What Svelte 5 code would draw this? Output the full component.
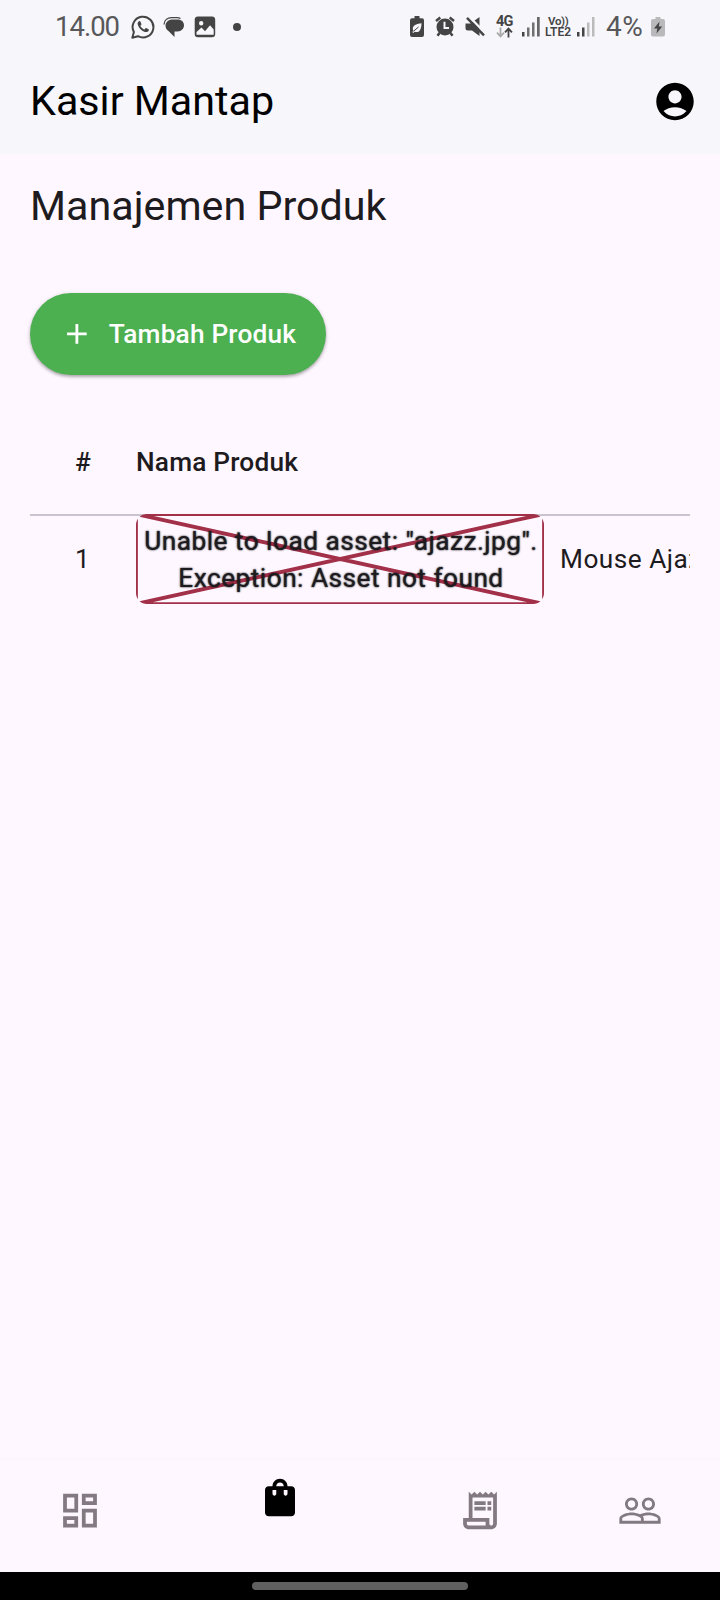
<script>
  const tabs = [
    {
      name: 'Dasbor',
      width: 160,
      path: 'M19 5v2h-4V5h4M9 5v6H5V5h4m10 8v6h-4v-6h4M9 17v2H5v-2h4M21 3h-8v6h8V3zM11 3H3v10h8V3zm10 8h-8v10h8V11zm-10 4H3v6h8v-6z'
    },
    {
      name: 'Produk',
      width: 240,
      active: true,
      path: 'M18 6h-2c0-2.21-1.79-4-4-4S8 3.79 8 6H6c-1.1 0-2 .9-2 2v12c0 1.1.9 2 2 2h12c1.1 0 2-.9 2-2V8c0-1.1-.9-2-2-2zm-8 4c0 .55-.45 1-1 1s-1-.45-1-1V8h2v2zm2-6c1.1 0 2 .9 2 2h-4c0-1.1.9-2 2-2zm4 6c0 .55-.45 1-1 1s-1-.45-1-1V8h2v2z'
    },
    {
      name: 'Transaksi',
      width: 160,
      path: 'M19.5 3.5L18 2l-1.5 1.5L15 2l-1.5 1.5L12 2l-1.5 1.5L9 2 7.5 3.5 6 2v14H3v3c0 1.66 1.34 3 3 3h12c1.66 0 3-1.34 3-3V2l-1.5 1.5zM15 20H6c-.55 0-1-.45-1-1v-1h10v2zm4-1c0 .55-.45 1-1 1s-1-.45-1-1v-3H8V5h11v14zM9 7h6v2H9zM16 7h2v2h-2zM9 10h6v2H9zM16 10h2v2h-2z'
    },
    {
      name: 'Pelanggan',
      width: 160,
      path: 'M16.5 13c-1.2 0-3.07.34-4.5 1-1.43-.67-3.3-1-4.5-1C5.33 13 1 14.08 1 16.25V19h22v-2.75c0-2.17-4.33-3.25-6.5-3.25zm-4 4.5h-10v-1.25c0-.54 2.56-1.75 5-1.75s5 1.21 5 1.75v1.25zm9 0H14v-1.25c0-.46-.2-.86-.52-1.22.88-.3 1.96-.53 3.02-.53 2.44 0 5 1.21 5 1.75v1.25zM7.5 12c1.93 0 3.5-1.57 3.5-3.5S9.43 5 7.5 5 4 6.57 4 8.5 5.57 12 7.5 12zm0-5.5c1.1 0 2 .9 2 2s-.9 2-2 2-2-.9-2-2 .9-2 2-2zm9 5.5c1.93 0 3.5-1.57 3.5-3.5S18.43 5 16.5 5 13 6.57 13 8.5s1.57 3.5 3.5 3.5zm0-5.5c1.1 0 2 .9 2 2s-.9 2-2 2-2-.9-2-2 .9-2 2-2z'
    }
  ];
</script>

<div class="screen">
  <header>
    <div class="status">
      <div class="group left">
        <span class="time">14.00</span>
        <svg width="24" height="24" viewBox="0 0 24 24">
          <path d="M1.3 22.7l1.6-5.6A10.4 10.4 0 1 1 7 21.2z" fill="none" stroke="currentColor" stroke-width="2" stroke-linejoin="round" />
          <path d="M8.2 6.2c-.9.3-1.7 1.3-1.6 2.6.2 2.100 1.800 4.400 3.500 5.900 1.800 1.500 3.900 2.500 5.600 2.300 1.300-.2 2.200-1.100 2.200-2.300 0-.6-2.500-1.900-3.100-1.800-.5.100-.9 1.400-1.500 1.500-.9.100-3.600-2.400-3.800-3.400-.1-.6 1-1.100 1-1.700 0-.5-1-2.900-1.400-3.100-.2-.1-.5-.1-.9 0z" />
        </svg>
        <svg class="chat" width="22" height="22" viewBox="0 0 22 22">
          <path d="M9.500 3.500h5c4 0 6.500 2.400 6.500 5.700s-2.500 6.200-6.500 6.200h-3V21l-6-6C3.600 13.800 2.500 12 2.500 9.800c0-3.700 3-6.300 7-6.300z" />
          <path d="M1 8.500C1.200 4.200 4.500 1.700 8.500 1.600H14c1.500 0 2.500.3 3.500.9" fill="none" stroke="currentColor" stroke-width="1.300" />
        </svg>
        <svg class="photo" width="22" height="22" viewBox="0 0 22 22">
          <path fill-rule="evenodd" d="M4 .5h14A3.300 3.300 0 0 1 21.200 4v14a3.300 3.300 0 0 1-3.300 3.300H4A3.300 3.300 0 0 1 .7 18V4A3.300 3.300 0 0 1 4 .5zM2.500 18.800h17.200v-5.300L16 9.200l-5 6-3.500-3.700-5 4.500zM7.200 5a2.200 2.200 0 1 0 0 4.400A2.200 2.200 0 0 0 7.200 5z" />
        </svg>
        <i class="more"></i>
      </div>
      <div class="group right">
        <svg width="14" height="21" viewBox="0 0 14 21">
          <path d="M4.500 0h5v2.300H12a2 2 0 0 1 2 2V19a2 2 0 0 1-2 2H2a2 2 0 0 1-2-2V4.300a2 2 0 0 1 2-2h2.500z" />
          <path d="M11.500 7.200C7 7.800 3 8.800 2.800 12.500c0 1 .2 1.700.7 2.300L2.300 16l1 .9 1.300-1.200c3.900 1.400 6.700-.8 6.900-8.500z" fill="#f6f6fb" />
          <path d="M3.500 15.300l5-4.300" stroke="#444" stroke-width="1" />
        </svg>
        <svg class="alarm" width="20" height="21" viewBox="0 0 20 21">
          <circle cx="10" cy="11" r="8.500" />
          <path d="M1 5l4.300-3.500M19 5l-4.300-3.500" stroke="currentColor" stroke-width="2.400" />
          <path d="M4.500 17l-2 2.800M15.500 17l2 2.800" stroke="currentColor" stroke-width="2.500" />
          <path d="M9.500 5.800V12h4.500" fill="none" stroke="#f6f6fb" stroke-width="2" />
        </svg>
        <svg class="mute" width="21" height="22" viewBox="0 0 21 22">
          <path d="M.5 7.500h5L14.500 1v19L7 14.500H3a2.500 2.500 0 0 1-2.500-2.500z" />
          <path d="M3.500 0l17 17.500" stroke="#f6f6fb" stroke-width="2.500" />
          <path d="M2 1.800l17 17.500" stroke="currentColor" stroke-width="2.400" />
        </svg>
        <div class="data">
          <span>4G</span>
          <svg width="17" height="11" viewBox="0 0 17 11" fill="none" stroke-width="1.800">
            <path d="M4.500.5v8.500M1 5.700l3.500 3.700L8 5.700" stroke="#aaa" />
            <path d="M12.500 10.500V2M9 5.300l3.500-3.700L16 5.300" stroke="#444" />
          </svg>
        </div>
        <svg class="signal" width="18" height="20" viewBox="0 0 18 20">
          <rect y="15" width="2.500" height="4.500" /><rect x="5" y="10.500" width="2.500" height="9" opacity=".75" /><rect x="10" y="5.500" width="2.500" height="14" opacity=".75" /><rect x="15" y="0" width="2.700" height="19.500" opacity=".8" />
        </svg>
        <div class="volte"><span class="vo">Vo))</span><span>LTE2</span></div>
        <svg class="signal two" width="18" height="20" viewBox="0 0 18 20">
          <rect y="15" width="2.500" height="4.500" /><rect x="5" y="10.500" width="2.500" height="9" /><rect x="10" y="5.500" width="2.500" height="14" fill="#bbb" /><rect x="15" y="0" width="2.500" height="19.500" fill="#bbb" />
        </svg>
        <span class="percent">4%</span>
        <svg class="charge" width="14" height="20" viewBox="0 0 14 20">
          <path d="M4.500 0h5v2H12a2 2 0 0 1 2 2v13.500a2 2 0 0 1-2 2H2a2 2 0 0 1-2-2V4a2 2 0 0 1 2-2h2.500z" fill="#b9b9bc" />
          <path d="M8.500 4.500L3 11.500h3.300L5.500 16.500 11.200 9.500H7.800z" />
        </svg>
      </div>
    </div>
    <div class="appbar">
      <h1>Kasir Mantap</h1>
      <svg width="46" height="45" viewBox="-0.267 0 24.533 24">
        <path d="M12 2C6.480 2 2 6.480 2 12s4.480 10 10 10 10-4.480 10-10S17.520 2 12 2zm0 4c1.930 0 3.500 1.570 3.500 3.500S13.930 13 12 13s-3.500-1.570-3.500-3.500S10.070 6 12 6zm0 14c-2.030 0-4.430-.82-6.140-2.880C7.550 15.800 9.680 15 12 15s4.450.8 6.140 2.120C16.430 19.180 14.030 20 12 20z" />
      </svg>
    </div>
  </header>

  <main>
    <h2>Manajemen Produk</h2>
    <button>
      <svg width="33.750" height="33.750" viewBox="0 0 24 24"><path d="M19 13h-6v6h-2v-6H5v-2h6V5h2v6h6v2z" /></svg>
      <span>Tambah Produk</span>
    </button>

    <div class="table">
      <div class="row head">
        <span>#</span>
        <span>Nama Produk</span>
      </div>
      <div class="row">
        <span>1</span>
        <div class="missing">
          <svg width="408" height="90" viewBox="0 0 408 90" fill="none" stroke="#a23049" stroke-width="3.750">
            <path d="M0 0h408v90H0zM0 0l408 90M0 90L408 0" />
          </svg>
          <p>Unable to load asset: "ajazz.jpg".<br />Exception: Asset not found</p>
        </div>
        <span class="product">Mouse Ajazz</span>
      </div>
    </div>
  </main>

  <nav>
    {#each tabs as tab}
      <div class="tab" class:active={tab.active} style="width: {tab.width}px">
        <svg width="46" height="45" viewBox="-0.267 0 24.533 24"><path d={tab.path} /></svg>
      </div>
    {/each}
  </nav>
  <footer><i></i></footer>
</div>

<style>
  :global(body) { margin: 0; }
  .screen {
    width: 720px;
    height: 1600px;
    display: flex;
    flex-direction: column;
    overflow: hidden;
    background: #fef7ff;
    color: #1d1b20;
    font-family: Roboto, sans-serif;
    font-size: 26.25px;
  }
  svg { display: block; flex: none; fill: currentColor; }
  svg[fill='none'] { fill: none; }
  header { height: 153.75px; background: #f6f6fb; flex: none; }
  .status {
    height: 53px;
    display: flex;
    justify-content: space-between;
    color: #444;
    margin-bottom: -4.25px;
  }
  .group { display: flex; align-items: center; }
  .left { padding-left: 55px; }
  .right { padding-right: 55px; }
  .time, .percent { line-height: 32px; color: #58585a; flex: none; font-weight: 400; }
  .time { font-size: 27.5px; width: 76px; letter-spacing: -1px; }
  .chat { margin: 0 0 0 8px; }
  .photo { margin: 0 0 0 9px; }
  .more { width: 8px; height: 8px; border-radius: 50%; background: #444; margin-left: 17px; }
  .alarm { margin-left: 11px; }
  .mute { margin-left: 10px; }
  .data { width: 17px; margin-left: 10px; padding-top: 1px; }
  .data span { display: block; font-size: 14.5px; line-height: 11px; font-weight: 700; letter-spacing: -0.7px; }
  .signal { margin-left: 9px; }
  .volte { width: 28px; margin-left: 5px; font-size: 12px; line-height: 11px; font-weight: 600; }
  .volte span { display: block; }
  .volte .vo { padding-left: 3px; font-size: 11.5px; letter-spacing: -0.3px; }
  .signal.two { margin-left: 4px; }
  .percent { font-size: 28px; width: 45px; margin-left: 11px; letter-spacing: 0.4px; }
  .appbar {
    height: 105px;
    display: flex;
    align-items: center;
    justify-content: space-between;
    padding: 0 22px 0 30px;
    color: #000;
  }
  h1, h2 { margin: 0; font-size: 41.25px; font-weight: 400; line-height: 44px; }
  h1 { margin-top: -1px; }
  main { flex: 1; padding: 30px 30px 0; min-height: 0; }
  button {
    display: flex;
    align-items: center;
    width: 296px;
    height: 82.5px;
    margin: 64.75px 0 0;
    padding: 0 0 0 30px;
    border: 0;
    border-radius: 42px;
    background: #4caf50;
    color: #fff;
    font: 500 26.25px/38px Roboto, sans-serif;
    letter-spacing: 0.19px;
    box-shadow: 0 2px 3px rgba(0, 0, 0, 0.25), 0 1px 5px rgba(0, 0, 0, 0.12);
  }
  button span { margin-left: 15px; }
  .table { margin-top: 34px; overflow: hidden; white-space: nowrap; letter-spacing: 0.47px; }
  .row {
    display: grid;
    grid-template-columns: 106px 408px 200px;
    align-items: center;
    height: 90px;
  }
  .row > span:first-child { padding-left: 45px; }
  .head {
    height: 107px;
    margin-bottom: -2px;
    padding-bottom: 0;
    border-bottom: 2px solid #cac4d0;
    box-sizing: border-box;
    font-weight: 500;
    letter-spacing: 0.19px;
  }
  .missing {
    display: grid;
    height: 90px;
    border-radius: 11px;
    overflow: hidden;
    place-items: center;
  }
  .missing svg, .missing p { grid-area: 1 / 1; }
  .missing p {
    margin: 0;
    padding: 2px 0 0 2px;
    text-align: center;
    font-weight: 400;
    line-height: 37.5px;
    letter-spacing: 0.47px;
    text-shadow: 0 0 2px #000;
  }
  .product { padding-left: 16px; }
  nav {
    display: flex;
    height: 112.5px;
    flex: none;
    box-shadow: 0 -1px 4px rgba(60, 30, 60, 0.025);
  }
  .tab { display: flex; justify-content: center; align-items: flex-start; padding-top: 28.5px; color: #827a80; }
  .tab.active { padding-top: 15.5px; color: #000; }
  footer { height: 28px; flex: none; background: #000; display: flex; justify-content: center; align-items: center; }
  footer i { width: 216px; height: 8px; border-radius: 4px; background: #606060; }
</style>
